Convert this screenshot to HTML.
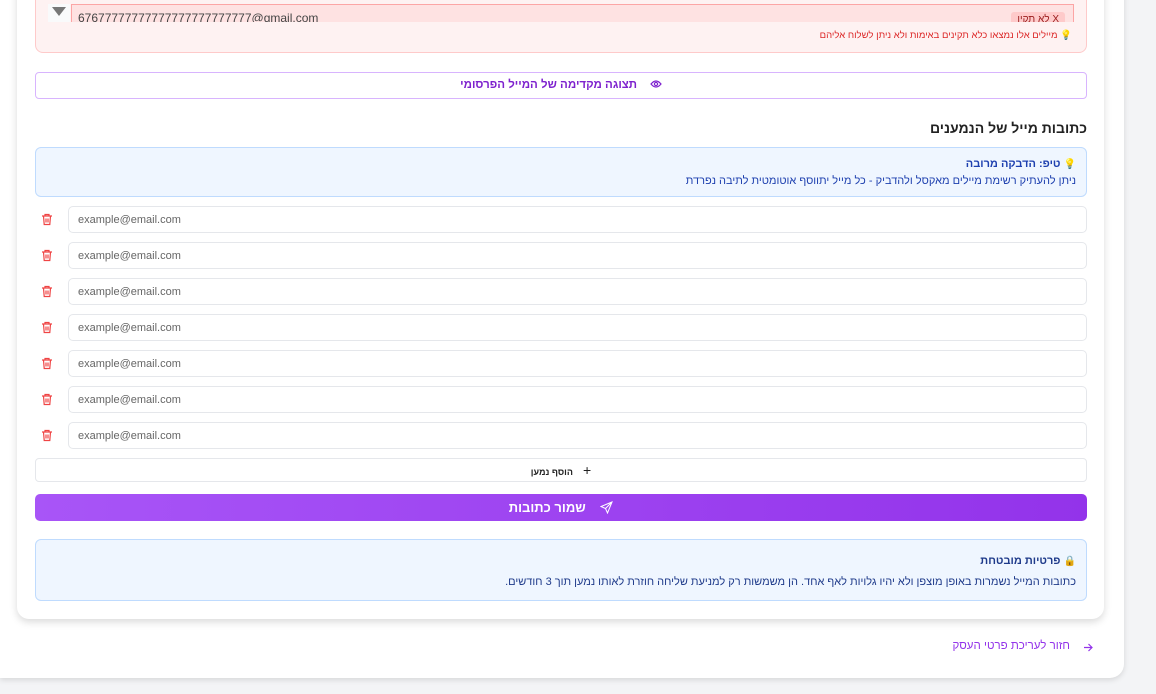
<!DOCTYPE html>
<html><head><meta charset="utf-8"><style>
*{box-sizing:border-box;margin:0;padding:0}
body{width:1156px;height:694px;overflow:hidden;background:#f3f4f6;font-family:"Liberation Sans","Noto Sans CJK JP",sans-serif;position:relative}
.outer{position:absolute;left:0;top:-20px;width:1124px;height:698px;background:#fff;border-radius:0 0 14px 0;box-shadow:0 2px 6px rgba(0,0,0,.12)}
.card{position:absolute;left:17px;top:-20px;width:1087px;height:639px;background:#fff;border-radius:0 0 12px 12px;box-shadow:0 3px 8px rgba(0,0,0,.15)}
.abs{position:absolute}
.red{left:35px;top:-10px;width:1052px;height:63px;background:#fef2f2;border:1px solid #fecaca;border-radius:0 0 8px 8px}
.ta{left:71px;top:4px;width:1003px;height:18px;background:#fee2e2;border:1px solid #fca5a5;border-bottom:none;overflow:hidden;font-size:12px;color:#444;padding:7px 0 0 6px;line-height:12px}
.tag{position:absolute;right:8px;top:7px;background:#fecaca;color:#991b1b;font-size:10px;padding:2px 6px;border-radius:3px;direction:rtl}
.msg{right:84px;top:30px;font-size:9.5px;color:#dc2626;direction:rtl}
.prev{left:35px;top:72px;width:1052px;height:27px;border:1px solid #d8b4fe;border-radius:4px;color:#7e22ce;font-size:11.5px;text-align:center;line-height:25px;direction:rtl}
h2{position:absolute;right:69px;top:120px;font-size:14px;font-weight:bold;color:#222;direction:rtl}
.tip{left:35px;top:147px;width:1052px;height:50px;background:#eff6ff;border:1px solid #bfdbfe;border-radius:6px;direction:rtl;padding:8px 10px 0 0;font-size:11px;color:#1e40af;line-height:16px}
.in{left:68px;width:1019px;height:27px;border:1px solid #e5e7eb;border-radius:5px;font-size:11px;color:#666;padding-left:9px;line-height:27px;background:#fff}
.tr{left:41px}
.add{left:35px;top:458px;width:1052px;height:24px;border:1px solid #e5e7eb;border-radius:4px;text-align:center;font-size:9px;line-height:22px;color:#222;direction:rtl}
.save{left:35px;top:494px;width:1052px;height:27px;border-radius:5px;background:linear-gradient(90deg,#a855f7,#9333ea);color:#fff;font-weight:bold;font-size:13px;text-align:center;line-height:27px;direction:rtl}
.priv{left:35px;top:539px;width:1052px;height:62px;background:#eff6ff;border:1px solid #bfdbfe;border-radius:6px;direction:rtl;padding:11px 10px 0 0;font-size:11px;color:#1e3a8a;line-height:20px}
.back{right:86px;top:640px;font-size:11.5px;color:#9333ea;direction:rtl}
</style></head><body>
<div class="outer"></div>
<div class="card"></div>
<div class="abs red"></div>
<div class="abs" style="left:48px;top:4px;width:22px;height:18px;background:#f9fafb"></div>
<svg class="abs" style="left:52px;top:7px" width="14" height="10"><path d="M0 0H14L7 9Z" fill="#777"/></svg>
<div class="abs ta">67677777777777777777777777@gmail.com<span class="tag">X לא תקין</span></div>
<div class="abs msg"><span style="color:#eab308">💡</span> מיילים אלו נמצאו כלא תקינים באימות ולא ניתן לשלוח אליהם</div>
<div class="abs prev"><svg width="12" height="10" viewBox="0 0 12 10" style="vertical-align:-1px"><path d="M1 5Q6 -1 11 5Q6 11 1 5Z" fill="none" stroke="#7e22ce" stroke-width="1.2"/><circle cx="6" cy="5" r="1.6" fill="none" stroke="#7e22ce" stroke-width="1.2"/></svg> &nbsp;&nbsp;&nbsp;<b>תצוגה מקדימה של המייל הפרסומי</b></div>
<h2>כתובות מייל של הנמענים</h2>
<div class="abs tip"><div><span style="color:#eab308;font-size:10px">💡</span> <b>טיפ: הדבקה מרובה</b></div><div>ניתן להעתיק רשימת מיילים מאקסל ולהדביק - כל מייל יתווסף אוטומטית לתיבה נפרדת</div></div>

<div class="abs in" style="top:206px">example@email.com</div>
<div class="abs in" style="top:242px">example@email.com</div>
<div class="abs in" style="top:278px">example@email.com</div>
<div class="abs in" style="top:314px">example@email.com</div>
<div class="abs in" style="top:350px">example@email.com</div>
<div class="abs in" style="top:386px">example@email.com</div>
<div class="abs in" style="top:422px">example@email.com</div>
<svg width="0" height="0" style="position:absolute"><defs><g id="t"><path d="M1 3H11M4 3V1.5H8V3M2.5 3L3.2 11.5H8.8L9.5 3M5 5.5V9.5M7 5.5V9.5" fill="none" stroke="#ef4444" stroke-width="1.2"/></g></defs></svg>
<svg class="abs tr" style="top:213px" width="12" height="13"><use href="#t"/></svg>
<svg class="abs tr" style="top:249px" width="12" height="13"><use href="#t"/></svg>
<svg class="abs tr" style="top:285px" width="12" height="13"><use href="#t"/></svg>
<svg class="abs tr" style="top:321px" width="12" height="13"><use href="#t"/></svg>
<svg class="abs tr" style="top:357px" width="12" height="13"><use href="#t"/></svg>
<svg class="abs tr" style="top:393px" width="12" height="13"><use href="#t"/></svg>
<svg class="abs tr" style="top:429px" width="12" height="13"><use href="#t"/></svg>

<div class="abs add"><span style="font-size:14px">+</span> &nbsp;&nbsp; <b>הוסף נמען</b></div>
<div class="abs save"><svg width="13" height="13" viewBox="0 0 13 13" style="vertical-align:-2px"><path d="M12 1L1 5.5L5.5 7.5L7.5 12Z M12 1L5.5 7.5" fill="none" stroke="#fff" stroke-width="1"/></svg> &nbsp;&nbsp; שמור כתובות</div>
<div class="abs priv"><div><span style="font-size:10px">🔒</span> <b>פרטיות מובטחת</b></div><div>כתובות המייל נשמרות באופן מוצפן ולא יהיו גלויות לאף אחד. הן משמשות רק למניעת שליחה חוזרת לאותו נמען תוך 3 חודשים.</div></div>
<div class="abs back">חזור לעריכת פרטי העסק</div>
<svg class="abs" style="left:1083px;top:643px" width="10" height="9" viewBox="0 0 10 9"><path d="M1 4.5H9M5.5 1L9 4.5L5.5 8" fill="none" stroke="#9333ea" stroke-width="1.2"/></svg>
</body></html>
